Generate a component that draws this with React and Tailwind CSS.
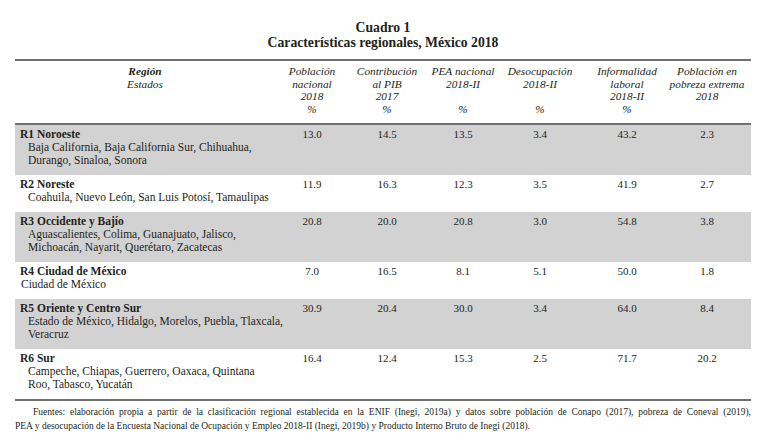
const headers = [
  ['Población', 'nacional', '2018', '%'],
  ['Contribución', 'al PIB', '2017', '%'],
  ['PEA nacional', '2018-II', '', '%'],
  ['Desocupación', '2018-II', '', '%'],
  ['Informalidad', 'laboral', '2018-II', '%'],
  ['Población en', 'pobreza extrema', '2018', ''],
]

const rows = [
  {
    title: 'R1 Noroeste',
    states: ['Baja California, Baja California Sur, Chihuahua,', 'Durango, Sinaloa, Sonora'],
    values: ['13.0', '14.5', '13.5', '3.4', '43.2', '2.3'],
    gray: true,
  },
  {
    title: 'R2 Noreste',
    states: ['Coahuila, Nuevo León, San Luis Potosí, Tamaulipas'],
    values: ['11.9', '16.3', '12.3', '3.5', '41.9', '2.7'],
  },
  {
    title: 'R3 Occidente y Bajío',
    states: ['Aguascalientes, Colima, Guanajuato, Jalisco,', 'Michoacán, Nayarit, Querétaro, Zacatecas'],
    values: ['20.8', '20.0', '20.8', '3.0', '54.8', '3.8'],
    gray: true,
  },
  {
    title: 'R4 Ciudad de México',
    states: ['Ciudad de México'],
    values: ['7.0', '16.5', '8.1', '5.1', '50.0', '1.8'],
    flush: true,
  },
  {
    title: 'R5 Oriente y Centro Sur',
    states: ['Estado de México, Hidalgo, Morelos, Puebla, Tlaxcala,', 'Veracruz'],
    values: ['30.9', '20.4', '30.0', '3.4', '64.0', '8.4'],
    gray: true,
  },
  {
    title: 'R6 Sur',
    states: ['Campeche, Chiapas, Guerrero, Oaxaca, Quintana', 'Roo, Tabasco, Yucatán'],
    values: ['16.4', '12.4', '15.3', '2.5', '71.7', '20.2'],
  },
]

const cols = 'grid grid-cols-[260px_74px_76px_76px_78px_96px_64px_1fr]'

export default function App() {
  return (
    <div className="w-[766px] h-[445px] bg-white text-[#231f20] [font-family:'Liberation_Serif',serif] px-[15px] pt-[20px] overflow-hidden">
      <div className="text-center font-bold text-[13.7px] leading-[15px]">
        <div>Cuadro 1</div>
        <div>Características regionales, México 2018</div>
      </div>

      <div className="mt-[9px] border-t-2 border-b-2 border-[#707070]">
        <div className={`${cols} border-b-2 border-[#707070] pt-[4px] pb-[7px] italic text-[11.3px] leading-[12.7px]`}>
          <div className="flex flex-col items-center">
            <span className="font-bold">Región</span>
            <span>Estados</span>
          </div>
          {headers.map((h, i) => (
            <div key={i} className="flex flex-col items-center whitespace-nowrap">
              {h.map((line, j) => (
                <span key={j} className="h-[12.7px]">{line}</span>
              ))}
            </div>
          ))}
          <div />
        </div>

        {rows.map((r) => (
          <div
            key={r.title}
            className={`${cols} pt-[3px] pb-[8px] text-[11px] leading-[13px] ${r.gray ? 'bg-[#d2d2d2]' : 'bg-white'}`}
          >
            <div className="pl-[5px] whitespace-nowrap text-[11.5px]">
              <div className="font-bold">{r.title}</div>
              {r.states.map((s) => (
                <div key={s} className={r.flush ? 'pl-[1px]' : 'pl-[8px]'}>{s}</div>
              ))}
            </div>
            {r.values.map((v, i) => (
              <div key={i} className="text-center">{v}</div>
            ))}
            <div />
          </div>
        ))}
      </div>

      <div className="mt-[4px] text-[9.5px] leading-[14px]">
        <div className="pl-[18px] text-justify [text-align-last:justify] whitespace-nowrap">
          Fuentes: elaboración propia a partir de la clasificación regional establecida en la ENIF (Inegi, 2019a) y datos sobre población de Conapo (2017), pobreza de Coneval (2019),
        </div>
        <div>
          PEA y desocupación de la Encuesta Nacional de Ocupación y Empleo 2018-II (Inegi, 2019b) y Producto Interno Bruto de Inegi (2018).
        </div>
      </div>
    </div>
  )
}
